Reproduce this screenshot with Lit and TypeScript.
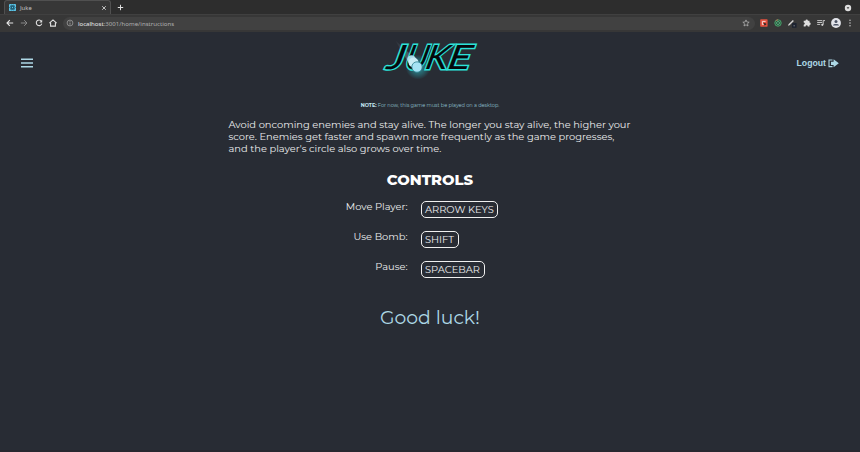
import { LitElement, html, css, svg } from "lit";
import { customElement } from "lit/decorators.js";

const PARAGRAPH = [
  "Avoid oncoming enemies and stay alive. The longer you stay alive, the higher your",
  "score. Enemies get faster and spawn more frequently as the game progresses,",
  "and the player's circle also grows over time.",
];

const CONTROLS = [
  { label: "Move Player:", key: "ARROW KEYS", cls: "move" },
  { label: "Use Bomb:", key: "SHIFT", cls: "bomb" },
  { label: "Pause:", key: "SPACEBAR", cls: "pause" },
];

@customElement("browser-chrome")
class BrowserChrome extends LitElement {
  static styles = css`
    :host { display: block; height: 32px; background: #373737; font-family: "Noto Sans", sans-serif; }
    .strip { height: 14px; background: #2d2d2d; display: flex; align-items: stretch; padding-left: 4px; box-sizing: border-box; }
    .tab { width: 107px; box-sizing: border-box; border: 1px solid #505050; border-bottom: 0; border-radius: 3px 3px 0 0;
      background: #373737; display: flex; align-items: center; padding: 0 3px 0 4px; color: #c4c4c4; font-size: 5.9px; }
    .tab span { flex: 1; padding-left: 4px; }
    .strip svg, .bar svg { display: block; flex: none; }
    .plus { margin: 4px 0 0 6px; }
    .drop { margin: 3.5px 8px 0 auto; }
    .bar { height: 18px; box-sizing: border-box; border-top: 1px solid #404040; display: flex; align-items: center; padding: 0 5px 1px; }
    .nav { display: flex; gap: 4.3px; }
    .url { flex: 1; height: 13px; margin-left: 5px; border-radius: 7px; background: #414141; display: flex; align-items: center;
      padding: 0 5px 0 3px; font-size: 6.1px; line-height: 13px; color: #b0b0b0; }
    .url .text { margin-left: 4px; flex: 1; }
    .url b { font-weight: 400; color: #ececec; }
    .tools { display: flex; gap: 4.4px; margin-left: 4px; }
  `;

  render() {
    return html`
      <div class="strip">
        <div class="tab">
          <svg width="7" height="7" viewBox="0 0 8 8"><rect width="8" height="8" rx="1" fill="#5cc4e6"/>
            <g fill="none" stroke="#17485c" stroke-width=".7"><ellipse cx="4" cy="4" rx="3.2" ry="1.2"/><ellipse cx="4" cy="4" rx="3.2" ry="1.2" transform="rotate(60 4 4)"/><ellipse cx="4" cy="4" rx="3.2" ry="1.2" transform="rotate(120 4 4)"/></g></svg>
          <span>Juke</span>
          <svg width="6" height="6" viewBox="0 0 6 6"><path d="M1.2 1.2 4.8 4.8M4.8 1.2 1.2 4.8" stroke="#d0d0d0" stroke-width=".9"/></svg>
        </div>
        <svg class="plus" width="7" height="7" viewBox="0 0 7 7"><path d="M3.5.8V6.2M.8 3.5H6.2" stroke="#e0e0e0" stroke-width="1"/></svg>
        <svg class="drop" width="8" height="8" viewBox="0 0 8 8"><circle cx="4" cy="4" r="3.2" fill="#dedede"/><path d="M2.6 3.3H5.4L4 5.1z" fill="#333"/></svg>
      </div>
      <div class="bar">
        <div class="nav">
          <svg width="10" height="10" viewBox="0 0 10 10"><path d="M8.2 5H2.1M4.8 2.2 2 5l2.8 2.8" fill="none" stroke="#e6e6e6" stroke-width="1.1"/></svg>
          <svg width="10" height="10" viewBox="0 0 10 10"><path d="M1.8 5H7.9M5.2 2.2 8 5 5.2 7.8" fill="none" stroke="#888" stroke-width="1"/></svg>
          <svg width="10" height="10" viewBox="0 0 10 10"><path d="M7.4 3.2A2.8 2.8 0 1 0 7.8 5.6" fill="none" stroke="#e0e0e0" stroke-width="1.1"/><path d="M8.2 1.7V4.5H5.4z" fill="#e0e0e0"/></svg>
          <svg width="10" height="10" viewBox="0 0 10 10"><path d="M1.4 5.2 5 1.9 8.6 5.2M2.6 4.7V8.1H7.4V4.7" fill="none" stroke="#e0e0e0" stroke-width="1.1"/></svg>
        </div>
        <div class="url">
          <svg width="8" height="8" viewBox="0 0 8 8"><circle cx="4" cy="4" r="2.9" fill="none" stroke="#aaa" stroke-width=".7"/><path d="M4 3.6V5.7M4 2.2V3" stroke="#aaa" stroke-width=".8"/></svg>
          <span class="text"><b>localhost</b>:3001/home/instructions</span>
          <svg width="8" height="8" viewBox="0 0 8 8"><path d="M4 .9 4.9 3 7.2 3.2 5.5 4.7 6 7 4 5.8 2 7 2.5 4.7.8 3.2 3.1 3z" fill="none" stroke="#bdbdbd" stroke-width=".7"/></svg>
        </div>
        <div class="tools">
          <svg width="10" height="10" viewBox="0 0 10 10"><rect x="1.2" y="1.3" width="7.4" height="7.4" rx=".6" fill="#e2513f"/><path d="M6.6 3.4H3.4V6.5H4.6" fill="none" stroke="#f4dcd7" stroke-width="1"/><path d="M4.6 4.8 7.2 5.6V6.8L5.4 7.6z" fill="#372b2a"/></svg>
          <svg width="10" height="10" viewBox="0 0 10 10"><circle cx="5" cy="5" r="3.2" fill="#254b39" stroke="#4fae72" stroke-width=".9"/><circle cx="5" cy="5" r="1.5" fill="none" stroke="#64c38b" stroke-width=".8"/><path d="M2.8 2.8A3.1 3.1 0 0 1 5 1.8" fill="none" stroke="#c66c50" stroke-width=".9"/></svg>
          <svg width="10" height="10" viewBox="0 0 10 10"><path d="M1 7.7 1.5 6.2 5.8 2 6.9 3.1 2.6 7.3z" fill="#d2d2d2"/><rect x="5" y="5" width="4.6" height="4.8" rx=".6" fill="#1d2330"/><path d="M6.4 7.8H8" stroke="#aaa" stroke-width=".6"/></svg>
          <svg width="10" height="10" viewBox="0 0 10 10"><path d="M1.7 2.8H3.5A1.2 1.2 0 1 1 5.9 2.8H7.5V4.5A1.2 1.2 0 1 1 7.5 6.9V8.4H5.8A1.1 1.1 0 0 0 3.6 8.4H1.7V6.7A1.1 1.1 0 0 0 1.7 4.5z" fill="#dedede"/></svg>
          <svg width="10" height="10" viewBox="0 0 10 10"><path d="M1.2 2.6H6.2M1.2 4.5H6.2M1.2 6.4H4.2M7.2 6.6V2.6H9" fill="none" stroke="#d4d4d4" stroke-width=".9"/><circle cx="6.3" cy="6.8" r="1.1" fill="#d4d4d4"/></svg>
          <svg width="10" height="10" viewBox="0 0 10 10"><circle cx="5" cy="5" r="4.9" fill="#e2e4ea"/><circle cx="5" cy="3.6" r="1.5" fill="#4a5264"/><path d="M2 7.4C2.2 5.5 7.8 5.5 8 7.4z" fill="#4a5264"/></svg>
          <svg width="10" height="10" viewBox="0 0 10 10"><g fill="#d8d8d8"><circle cx="5" cy="2.3" r=".7"/><circle cx="5" cy="5" r=".7"/><circle cx="5" cy="7.7" r=".7"/></g></svg>
        </div>
      </div>`;
  }
}

@customElement("juke-logo")
class JukeLogo extends LitElement {
  static styles = css`
    :host, svg { display: block; }
    text { font-family: "Lato", sans-serif; font-size: 33.5px; font-weight: 400; stroke-linejoin: miter; }
    .glow { fill: none; stroke: #2ce2d8; stroke-width: 3; }
    .core { fill: #05090d; stroke: #05090d; stroke-width: 0.2; }
  `;

  render() {
    const word = (cls: string) => svg`
      <g class=${cls} transform="translate(0 34.4) skewX(-20)">
        <text x="9.5" textLength="17" lengthAdjust="spacingAndGlyphs">J</text>
        <text x="27.5" textLength="22" lengthAdjust="spacingAndGlyphs">U</text>
        <text x="48" textLength="22" lengthAdjust="spacingAndGlyphs">K</text>
        <text x="70" textLength="23" lengthAdjust="spacingAndGlyphs">E</text>
      </g>`;
    return html`<svg width="110" height="50" viewBox="0 0 110 50">
      <defs>
        <radialGradient id="halo"><stop offset="0" stop-color="#35b7bd" stop-opacity=".85"/><stop offset=".6" stop-color="#28858e" stop-opacity=".55"/><stop offset="1" stop-color="#28858e" stop-opacity="0"/></radialGradient>
        <linearGradient id="trail" x1="0" y1="0" x2="1" y2="1"><stop offset="0" stop-color="#9aabb8" stop-opacity="0"/><stop offset="1" stop-color="#8fb7c4" stop-opacity=".65"/></linearGradient>
      </defs>
      <path d="M20 5 46 29 35 30z" fill="url(#trail)"/>
      <circle cx="43" cy="32" r="12.5" fill="url(#halo)"/>
      ${word("glow")}${word("core")}
      <circle cx="36.5" cy="24.5" r="4.2" fill="#a9dce8"/><circle cx="38.5" cy="27.5" r="5" fill="#c9edf5"/>
      <circle cx="42" cy="32" r="5.2" fill="#a6e3f4" stroke="#2c8290" stroke-width=".8"/>
    </svg>`;
  }
}

@customElement("app-root")
class AppRoot extends LitElement {
  static styles = css`
    :host { display: flex; flex-direction: column; height: 452px; box-sizing: border-box; overflow: hidden; background: #282c34;
      border-bottom: 2px solid #28272f; color: #ececee; font-family: "Montserrat", "Inter", sans-serif; }
    header { height: 53px; display: grid; grid-template-columns: 1fr 110px 1fr; align-items: start; color: #add8e6; }
    .menu { margin: 26px 0 0 21px; }
    .menu svg, .logout svg { display: block; }
    juke-logo { margin-top: 3px; }
    .logout { display: flex; align-items: center; justify-content: flex-end; gap: 2px; margin: 25px 21px 0 0;
      font: 700 8.7px/13px "Liberation Sans", sans-serif; }
    main { display: flex; flex-direction: column; }
    .note { align-self: center; margin-top: 17px; font-size: 4.96px; line-height: 6px; color: #8fc0ce; white-space: nowrap; }
    .note b { color: #c4e8f3; }
    .about { margin: 10px 0 0 228.5px; font-size: 9.9px; line-height: 12px; white-space: nowrap; }
    h1 { margin: 17px 0 0; text-align: center; font-size: 14.8px; line-height: 18px; font-weight: 800; color: #fff; }
    .controls { display: grid; grid-template-columns: 407.6px auto; column-gap: 13.4px; row-gap: 13px; margin-top: 12px; font-size: 9.9px; }
    .label { justify-self: end; line-height: 10px; }
    .key { justify-self: start; box-sizing: border-box; height: 17px; border: 1px solid #f0f0f0; border-radius: 5px; padding: 0 3px; line-height: 15px; white-space: nowrap; }
    .key.move { width: 77px; } .key.bomb { width: 38px; } .key.pause { width: 64px; }
    .luck { align-self: center; margin-top: 28px; font-size: 18.8px; line-height: 24px; color: #add8e6; }
  `;

  render() {
    return html`
      <browser-chrome></browser-chrome>
      <header>
        <div class="menu"><svg width="12" height="10" viewBox="0 0 12 10"><path d="M0 1.3H12M0 5H12M0 8.8H12" stroke="#add8e6" stroke-width="1.4"/></svg></div>
        <juke-logo></juke-logo>
        <div class="logout"><span>Logout</span>
          <svg width="11" height="9" viewBox="0 0 11 9"><path d="M4.5 1H1V7.6H4.5" fill="none" stroke="#add8e6" stroke-width="1.1"/><path d="M3 2.7H5.6V.3L10.8 4.3 5.6 8.3V5.9H3z" fill="#add8e6"/></svg>
        </div>
      </header>
      <main>
        <div class="note"><b>NOTE:</b> For now, this game must be played on a desktop.</div>
        <div class="about">${PARAGRAPH.map((line) => html`<div>${line}</div>`)}</div>
        <h1>CONTROLS</h1>
        <div class="controls">${CONTROLS.map((c) => html`<span class="label">${c.label}</span><span class="key ${c.cls}">${c.key}</span>`)}</div>
        <div class="luck">Good luck!</div>
      </main>`;
  }
}
